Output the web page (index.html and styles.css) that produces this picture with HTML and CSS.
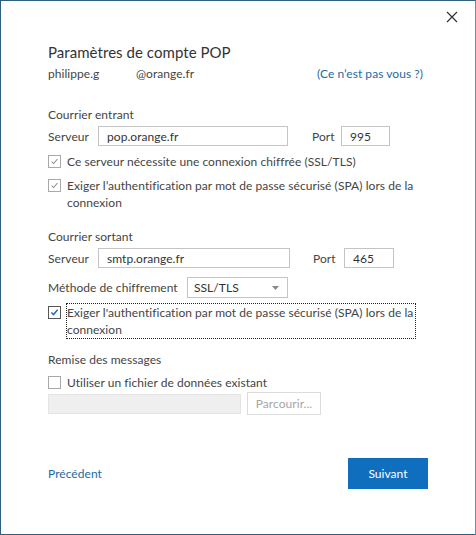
FILE: index.html
```html
<!DOCTYPE html>
<html lang="fr">
<head>
<meta charset="utf-8">
<title>Paramètres de compte POP</title>
<link rel="stylesheet" href="styles.css">
</head>
<body>
<div class="dialog">
  <div class="header">
    <button class="close" aria-label="Fermer">
      <svg width="12" height="12" viewBox="0 0 12 12"><path d="M1 1L11 11M11 1L1 11" stroke="#333" stroke-width="1.2" fill="none"/></svg>
    </button>
  </div>
  <div class="content">
    <h1 class="title">Paramètres de compte POP</h1>
    <div class="user-row">
      <span class="user-name">philippe.g</span>
      <span class="user-domain">@orange.fr</span>
      <a class="link not-you">(Ce n’est pas vous ?)</a>
    </div>

    <div class="section-label sec-in">Courrier entrant</div>
    <div class="server-row row-in">
      <span class="lbl-server">Serveur</span>
      <span class="input input-server">pop.orange.fr</span>
      <span class="lbl-port">Port</span>
      <span class="input input-port">995</span>
    </div>
    <div class="check-row cb1">
      <span class="cbox grey"><svg viewBox="0 0 13 13"><path d="M3 6.5L5.5 9L10 3.5" stroke="#8a8a8a" stroke-width="1.2" fill="none"/></svg></span>
      <span class="cb-text">Ce serveur nécessite une connexion chiffrée (SSL/TLS)</span>
    </div>
    <div class="check-row cb2">
      <span class="cbox grey"><svg viewBox="0 0 13 13"><path d="M3 6.5L5.5 9L10 3.5" stroke="#8a8a8a" stroke-width="1.2" fill="none"/></svg></span>
      <span class="cb-text">Exiger l’authentification par mot de passe sécurisé (SPA) lors de la<br>connexion</span>
    </div>

    <div class="section-label sec-out">Courrier sortant</div>
    <div class="server-row row-out">
      <span class="lbl-server">Serveur</span>
      <span class="input input-server2">smtp.orange.fr</span>
      <span class="lbl-port2">Port</span>
      <span class="input input-port2">465</span>
    </div>
    <div class="method-row">
      <span class="lbl-method">Méthode de chiffrement</span>
      <span class="select"><span class="select-text">SSL/TLS</span><svg class="caret" width="7" height="4" viewBox="0 0 7 4"><path d="M0 0H7L3.5 4Z" fill="#8a8a8a"/></svg></span>
    </div>
    <div class="check-row cb3">
      <span class="cbox dark"><svg viewBox="0 0 13 13"><path d="M2.8 6.5L5.3 9L10.2 3.3" stroke="#1f6ec0" stroke-width="1.8" fill="none"/></svg></span>
      <span class="cb-text focus">Exiger l'authentification par mot de passe sécurisé (SPA) lors de la<br>connexion</span>
    </div>

    <div class="section-label sec-del">Remise des messages</div>
    <div class="check-row cb4">
      <span class="cbox grey"></span>
      <span class="cb-text">Utiliser un fichier de données existant</span>
    </div>
    <div class="file-row">
      <span class="input-disabled"></span>
      <span class="btn-browse">Parcourir...</span>
    </div>

    <div class="footer">
      <a class="link prev">Précédent</a>
      <span class="btn-next">Suivant</span>
    </div>
  </div>
</div>
</body>
</html>
```
FILE: styles.css
```css
* { box-sizing: border-box; }
html, body { margin: 0; padding: 0; background: #fff; }
body {
  font-family: Lato, "Noto Sans", sans-serif;
  font-size: 12px;
  letter-spacing: 0.05px;
  color: #444;
  line-height: 17px;
  white-space: nowrap;
}
.dialog {
  width: 476px;
  height: 535px;
  border: 1px solid #2f5f80;
  border-right-color: #6e8ea6;
  background: #fff;
}
.header {
  height: 32px;
  display: flex;
  justify-content: flex-end;
  align-items: center;
  padding-right: 17px;
}
.close {
  border: 0;
  background: transparent;
  padding: 0;
  width: 12px;
  height: 12px;
  display: flex;
}
.content {
  padding-left: 47px;
  padding-right: 47px;
  display: flex;
  flex-direction: column;
}
.title {
  margin: 8px 0 0;
  font-size: 15px;
  font-weight: normal;
  line-height: 22px;
  color: #333;
}
.user-row {
  margin-top: 2px;
  display: flex;
  height: 17px;
}
.user-name { width: 88px; }
.user-domain { width: 181px; }
.link { color: #1e6aa3; text-decoration: none; }
.section-label { height: 17px; }
.sec-in { margin-top: 24px; }
.sec-out { margin-top: 17px; }
.sec-del { margin-top: 12px; }
.server-row {
  display: flex;
  align-items: center;
  height: 20px;
  margin-top: 3px;
}
.lbl-server { width: 50px; }
.input {
  height: 20px;
  border: 1px solid #c4c4c4;
  padding: 0 8px;
  display: flex;
  align-items: center;
  color: #333;
}
.input-server { width: 190px; }
.input-server2 { width: 192px; }
.lbl-port { margin-left: 24px; width: 29px; }
.lbl-port2 { margin-left: 23px; width: 31px; }
.input-port { width: 49px; }
.input-port2 { width: 50px; }
.check-row {
  display: flex;
  align-items: flex-start;
}
.cbox {
  width: 13px;
  height: 13px;
  border: 1px solid #a8a8a8;
  margin-top: 2px;
  flex: none;
  display: flex;
}
.cbox svg { width: 11px; height: 11px; }
.cbox.dark { border-color: #555; }
.cb-text { margin-left: 6px; }
.cb1 { margin-top: 7px; }
.cb2 { margin-top: 7px; }
.cb3 { margin-top: 5px; }
.cb3 .cbox { margin-top: 3px; }
.cb4 { margin-top: 6px; }
.cb-text.focus {
  margin-left: 5px;
  border: 1px dotted #222;
  padding: 0 2px 0 0;
}
.method-row {
  margin-top: 9px;
  display: flex;
  align-items: center;
  height: 21px;
}
.lbl-method { width: 139px; }
.select {
  width: 101px;
  height: 21px;
  border: 1px solid #c4c4c4;
  display: flex;
  align-items: center;
  justify-content: space-between;
  padding: 0 8px 0 6px;
  color: #333;
}
.file-row {
  margin-top: 1px;
  display: flex;
  align-items: center;
  height: 23px;
}
.input-disabled {
  width: 193px;
  height: 20px;
  background: #efefef;
  border: 1px solid #e4e4e4;
}
.btn-browse {
  margin-left: 6px;
  width: 74px;
  height: 23px;
  border: 1px solid #dcdcdc;
  color: #a6a6a6;
  display: flex;
  align-items: center;
  justify-content: center;
}
.footer {
  margin-top: 43px;
  display: flex;
  align-items: center;
  justify-content: space-between;
  height: 31px;
}
.btn-next {
  width: 80px;
  height: 31px;
  background: #106ebe;
  color: #fff;
  display: flex;
  align-items: center;
  justify-content: center;
}
```
